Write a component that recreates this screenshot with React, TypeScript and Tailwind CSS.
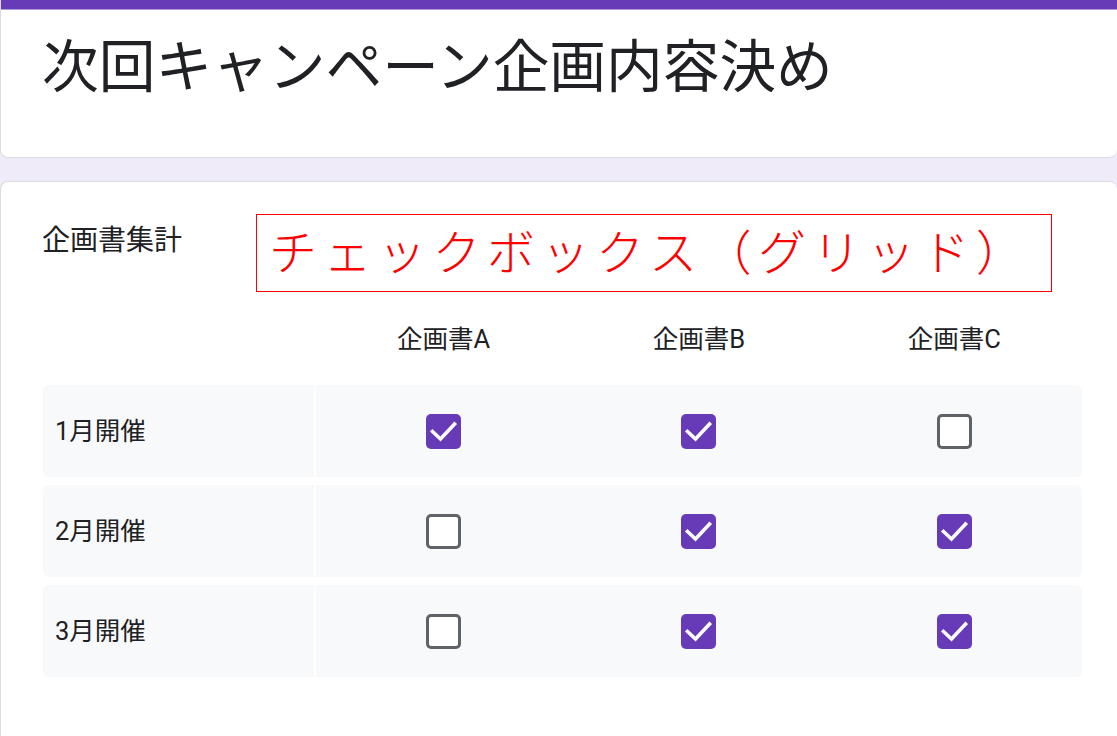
import React from "react";

const FONT = { fontFamily: 'Roboto, "Noto Sans CJK JP", "Noto Sans", sans-serif' };

function CheckBox({ checked }: { checked: boolean }) {
  if (checked) {
    return (
      <div className="w-[35px] h-[35px] rounded-[5px] bg-[#673ab7] flex items-center justify-center">
        <svg width="35" height="35" viewBox="0 0 35 35">
          <polyline
            points="6.5,17.5 14.5,25 28.5,10"
            fill="none"
            stroke="#ffffff"
            strokeWidth="3.6"
            strokeLinecap="square"
            strokeLinejoin="miter"
          />
        </svg>
      </div>
    );
  }
  return <div className="w-[35px] h-[35px] rounded-[5px] border-[3.5px] border-[#5f6368] bg-white" />;
}

const rows: { label: string; vals: boolean[] }[] = [
  { label: "1月開催", vals: [true, true, false] },
  { label: "2月開催", vals: [false, true, true] },
  { label: "3月開催", vals: [false, true, true] },
];

export default function App() {
  return (
    <div className="w-[1117px] h-[736px] overflow-hidden bg-[#efebf8] text-[#202124]" style={FONT}>
      {/* Title card */}
      <div className="w-[1117px] h-[158px] bg-white rounded-b-[8px] border-b border-l border-[#dadce0] flex flex-col">
        <div className="h-[9px] bg-[#673ab7]" />
        <div className="h-px bg-[#b39ddb]" />
        <div className="pl-[41px] pt-[29px] text-[56.7px] leading-[57px] font-normal">次回キャンペーン企画内容決め</div>
      </div>

      {/* Question card */}
      <div className="relative mt-[23px] w-[1117px] h-[560px] bg-white rounded-t-[8px] border-t border-l border-[#dadce0] pl-[41px] pt-[45px]">
        <div className="text-[28px] leading-[28px]">企画書集計</div>

        {/* annotation box */}
        <div className="absolute left-[255px] top-[32px] w-[796px] h-[78px] border border-[#ff0000] bg-white flex items-center pl-[12px] pb-[8px]">
          <span
            className="text-[48px] leading-[48px] text-[#ff0000] tracking-[6.5px] whitespace-nowrap"
            style={{ fontFamily: '"Noto Sans CJK JP", sans-serif', fontWeight: 300 }}
          >
            チェックボックス（グリッド）
          </span>
        </div>

        {/* header row */}
        <div className="mt-[70px] flex w-[1040px] pl-px">
          <div className="w-[273px]" />
          <div className="flex-1 grid grid-cols-3">
            {["企画書A", "企画書B", "企画書C"].map((h) => (
              <div key={h} className="text-center text-[25.5px] leading-[28px]">
                {h}
              </div>
            ))}
          </div>
        </div>

        {/* rows */}
        <div className="mt-[32px] flex flex-col gap-2 w-[1040px] pl-px">
          {rows.map((r) => (
            <div key={r.label} className="flex h-[92px] gap-[2px]">
              <div className="w-[271px] bg-[#f8f9fa] rounded-l-[6px] flex items-center pl-[12px] text-[25.5px] leading-[28px]">
                {r.label}
              </div>
              <div className="flex-1 bg-[#f8f9fa] rounded-r-[6px] grid grid-cols-3">
                {r.vals.map((v, i) => (
                  <div key={i} className="flex items-center justify-center">
                    <CheckBox checked={v} />
                  </div>
                ))}
              </div>
            </div>
          ))}
        </div>
      </div>
    </div>
  );
}
